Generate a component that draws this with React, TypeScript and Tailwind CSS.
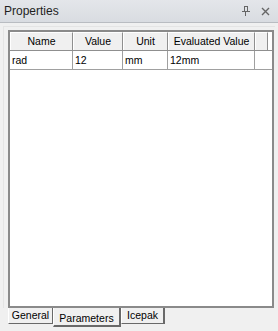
import React from 'react'

const columns = [
  { label: 'Name', w: 'w-[63px]' },
  { label: 'Value', w: 'w-[50px]' },
  { label: 'Unit', w: 'w-[45px]' },
  { label: 'Evaluated Value', w: 'w-[87px]' },
]

const row = ['rad', '12', 'mm', '12mm']

function PinIcon() {
  return (
    <svg width="9" height="10" viewBox="0 0 9 10" className="block">
      <path d="M2.5 0.5h4M3 0.5v5M6 0.5v5M0.5 5.5h8M4.5 5.5v4" stroke="#666" strokeWidth="1" fill="none" shapeRendering="crispEdges" />
    </svg>
  )
}

function CloseIcon() {
  return (
    <svg width="9" height="9" viewBox="0 0 9 9" className="block">
      <path d="M1 1L8 8M8 1L1 8" stroke="#666" strokeWidth="1.4" fill="none" />
    </svg>
  )
}

export default function App() {
  return (
    <div
      className="w-[278px] h-[331px] bg-[#f0f0f0] flex flex-col text-black"
      style={{ fontFamily: '"Liberation Sans", Arial, sans-serif' }}
    >
      {/* Title bar */}
      <div className="h-[23px] shrink-0 flex items-center justify-between pl-[4px] pr-[8px] bg-gradient-to-b from-[#e4e6ea] to-[#d9dce1] border-b border-[#b9bcc1]">
        <span className="text-[12px] text-[#1e1e1e]">Properties</span>
        <div className="flex items-center gap-[11px]">
          <PinIcon />
          <CloseIcon />
        </div>
      </div>

      {/* Page */}
      <div className="flex-1 flex flex-col pl-[3px] pr-[3px] pt-[3px]">
        <div className="flex-1 border-t border-l border-[#e4e4e4] pl-[4px] pt-[3px] pr-[1px] flex flex-col">
          <div className="flex-1 bg-white border-2 border-[#8a8a8a] flex flex-col">
            {/* Header */}
            <div className="flex h-[19px] border-b border-[#8f8f8f]">
              {columns.map((c) => (
                <div
                  key={c.label}
                  className={`${c.w} shrink-0 h-full bg-[#f0f0f0] border-t border-l border-white border-r border-r-[#8f8f8f] flex items-center justify-center text-[10.5px] leading-none`}
                >
                  {c.label}
                </div>
              ))}
              <div className="w-[13px] shrink-0 h-full bg-[#f0f0f0] border-t border-l border-white border-r border-r-[#8f8f8f]" />
            </div>
            {/* Data row */}
            <div className="flex h-[19px] border-b border-[#a0a0a0]">
              {row.map((v, i) => (
                <div
                  key={i}
                  className={`${columns[i].w} shrink-0 h-full border-r border-[#a0a0a0] flex items-center pl-[2px] text-[10.5px] leading-none`}
                >
                  {v}
                </div>
              ))}
            </div>
          </div>
        </div>

        {/* Tabs */}
        <div className="h-[23px] shrink-0 flex items-start pl-[5px]">
          <div className="h-[16px] w-[45px] bg-[#f0f0f0] border-l border-white border-r border-b border-r-[#696969] border-b-[#696969] flex items-center justify-center text-[10.5px] leading-none">
            General
          </div>
          <div className="h-[19px] w-[68px] bg-[#f0f0f0] border-l border-white border-r-2 border-b-2 border-r-[#696969] border-b-[#696969] flex items-center justify-center pt-[3px] text-[10.5px] leading-none">
            Parameters
          </div>
          <div className="h-[16px] w-[44px] bg-[#f0f0f0] border-l border-white border-r-2 border-b border-r-[#696969] border-b-[#696969] flex items-center justify-center text-[10.5px] leading-none">
            Icepak
          </div>
        </div>
      </div>
    </div>
  )
}
